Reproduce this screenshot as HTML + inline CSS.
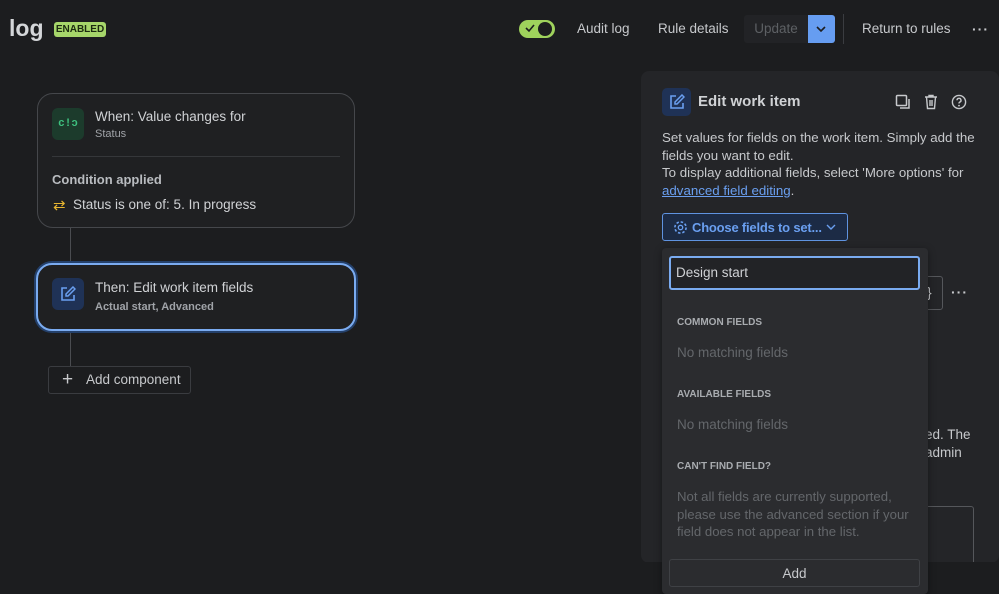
<!DOCTYPE html>
<html><head><meta charset="utf-8"><style>
*{box-sizing:border-box;margin:0;padding:0}
body{width:999px;height:594px;overflow:hidden;background:#1c1d1f;font-family:"Liberation Sans",sans-serif;color:#c7c9cc;position:relative;font-size:14px}
.a{position:absolute}
</style></head><body>
<div class="a" style="left:9px;top:15px;font-size:23px;font-weight:bold;color:#d4d6d9">log</div>
<div class="a" style="left:54px;top:22px;width:52px;height:15px;background:#a6d66a;border-radius:3px;color:#1c2b10;font-size:10px;font-weight:bold;text-align:center;line-height:15px">ENABLED</div>

<div class="a" style="left:519px;top:20px;width:36px;height:18px;background:#9fd25c;border-radius:9px"></div>
<div class="a" style="left:538px;top:22px;width:14px;height:14px;background:#1c1d1f;border-radius:50%"></div>
<svg class="a" style="left:525px;top:23px" width="10" height="10"><path d="M1 5l3 3 5-6" stroke="#1c1d1f" stroke-width="1.6" fill="none"/></svg>
<div class="a" style="left:577px;top:21px;color:#c7c9cc;font-size:13.5px">Audit log</div>
<div class="a" style="left:658px;top:21px;color:#c7c9cc;font-size:13.5px">Rule details</div>
<div class="a" style="left:744px;top:15px;width:64px;height:28px;background:#222326;border-radius:3px 0 0 3px;color:#5d6064;text-align:center;line-height:28px;font-size:13.5px">Update</div>
<div class="a" style="left:808px;top:15px;width:27px;height:28px;background:#669df1;border-radius:0 3px 3px 0"></div>
<svg class="a" style="left:815px;top:24px" width="12" height="10"><path d="M2 3l4 4 4-4" stroke="#1c1d1f" stroke-width="1.6" fill="none"/></svg>
<div class="a" style="left:843px;top:14px;width:1px;height:30px;background:#3a3c40"></div>
<div class="a" style="left:862px;top:21px;color:#c7c9cc;font-size:13.5px">Return to rules</div>
<div class="a" style="left:972px;top:21px;color:#c7c9cc;font-weight:bold;letter-spacing:1px">···</div>

<!-- left cards -->
<div class="a" style="left:70px;top:226px;width:1px;height:40px;background:#4a4c50"></div>
<div class="a" style="left:70px;top:330px;width:1px;height:36px;background:#4a4c50"></div>
<div class="a" style="left:37px;top:93px;width:318px;height:135px;border:1px solid #45474b;border-radius:16px;background:#1f2022"></div>
<div class="a" style="left:52px;top:108px;width:32px;height:32px;background:#1c3b2c;border-radius:6px;color:#3ec07f;font-size:11px;font-weight:bold;text-align:center;line-height:32px;font-family:'Liberation Mono',monospace">c!ɔ</div>
<div class="a" style="left:95px;top:109px;color:#d0d2d5;font-size:13.5px">When: Value changes for</div>
<div class="a" style="left:95px;top:128px;font-size:11px;color:#a0a3a8">Status</div>
<div class="a" style="left:52px;top:156px;width:288px;height:1px;background:#35373a"></div>
<div class="a" style="left:52px;top:172px;font-weight:bold;color:#b9bcc0;font-size:13px">Condition applied</div>
<div class="a" style="left:53px;top:196px;color:#e6b531;font-size:15px">⇄</div>
<div class="a" style="left:73px;top:197px;color:#d0d2d5;font-size:13.5px">Status is one of: 5. In progress</div>

<div class="a" style="left:36px;top:263px;width:320px;height:68px;border:2px solid #7aabf0;border-radius:16px;background:#1f2022;box-shadow:0 0 0 2px #24406a"></div>
<div class="a" style="left:52px;top:278px;width:32px;height:32px;background:#1f3256;border-radius:6px"></div>
<svg class="a" style="left:60px;top:286px" width="16" height="16"><path d="M7 2H2v12h12V9" stroke="#6a9ff0" stroke-width="1.6" fill="none"/><path d="M13 1l2 2-7 7H6V8z" stroke="#6a9ff0" stroke-width="1.5" fill="none"/></svg>
<div class="a" style="left:95px;top:280px;color:#d0d2d5;font-size:13.5px">Then: Edit work item fields</div>
<div class="a" style="left:95px;top:301px;font-size:11px;font-weight:bold;color:#a0a3a8">Actual start, Advanced</div>

<div class="a" style="left:48px;top:366px;width:143px;height:28px;border:1px solid #3a3c40;border-radius:3px"></div>
<div class="a" style="left:62px;top:369px;font-size:19px;color:#c7c9cc">+</div>
<div class="a" style="left:86px;top:372px;color:#c7c9cc;font-size:13.5px">Add component</div>

<!-- right panel -->
<div class="a" style="left:641px;top:71px;width:358px;height:492px;background:#242528;border-radius:8px"></div>
<div class="a" style="left:662px;top:88px;width:29px;height:28px;background:#1f3256;border-radius:5px"></div>
<svg class="a" style="left:669px;top:94px" width="16" height="16"><path d="M7 2H2v12h12V9" stroke="#6a9ff0" stroke-width="1.6" fill="none"/><path d="M13 1l2 2-7 7H6V8z" stroke="#6a9ff0" stroke-width="1.5" fill="none"/></svg>
<div class="a" style="left:698px;top:93px;font-weight:bold;color:#d0d2d5;font-size:15px">Edit work item</div>
<svg class="a" style="left:895px;top:94px" width="16" height="16"><rect x="1.5" y="1.5" width="10" height="10" rx="1" stroke="#c7c9cc" stroke-width="1.5" fill="none"/><path d="M14 5v9H5" stroke="#c7c9cc" stroke-width="1.5" fill="none"/></svg>
<svg class="a" style="left:923px;top:94px" width="16" height="16"><path d="M2 3h12M6 3V1.5h4V3M3.5 3l1 11.5h7l1-11.5M7 6v6M9 6v6" stroke="#c7c9cc" stroke-width="1.4" fill="none"/></svg>
<svg class="a" style="left:951px;top:94px" width="16" height="16"><circle cx="8" cy="8" r="6.6" stroke="#c7c9cc" stroke-width="1.4" fill="none"/><path d="M6 6.3a2 2 0 1 1 2.6 1.9c-.5.2-.6.6-.6 1.3" stroke="#c7c9cc" stroke-width="1.4" fill="none"/><circle cx="8" cy="11.6" r=".9" fill="#c7c9cc"/></svg>
<div class="a" style="left:662px;top:129px;width:325px;line-height:17.5px;color:#c7c9cc;font-size:13.3px">Set values for fields on the work item. Simply add the fields you want to edit.<br>To display additional fields, select 'More options' for <span style="color:#6a9ff0;text-decoration:underline">advanced field editing</span>.</div>
<div class="a" style="left:662px;top:213px;width:186px;height:28px;background:#1c2b45;border:1px solid #5f93e0;border-radius:3px"></div>
<svg class="a" style="left:673px;top:220px" width="15" height="15"><circle cx="7.5" cy="7.5" r="2.2" stroke="#6a9ff0" stroke-width="1.3" fill="none"/><circle cx="7.5" cy="7.5" r="5.6" stroke="#6a9ff0" stroke-width="1.6" stroke-dasharray="2.5 1.9" fill="none"/></svg>
<div class="a" style="left:692px;top:220px;color:#6a9ff0;font-weight:bold;font-size:13px;letter-spacing:-0.2px">Choose fields to set...</div>
<svg class="a" style="left:826px;top:223px" width="10" height="8"><path d="M1 2l4 4 4-4" stroke="#6a9ff0" stroke-width="1.4" fill="none"/></svg>

<div class="a" style="left:900px;top:276px;width:43px;height:34px;border:1px solid #55575b;border-radius:3px"></div>
<div class="a" style="left:927px;top:284px;color:#c7c9cc">}</div>
<div class="a" style="left:951px;top:284px;color:#c7c9cc;font-weight:bold;letter-spacing:1px">···</div>
<div class="a" style="left:925px;top:427px;color:#c7c9cc;font-size:13.5px">ed. The</div>
<div class="a" style="left:925px;top:445px;color:#c7c9cc;font-size:13.5px">admin</div>
<div class="a" style="left:900px;top:506px;width:74px;height:70px;border:1px solid #55575b;border-radius:3px"></div>
<div class="a" style="left:641px;top:562px;width:358px;height:32px;background:#1c1d1f"></div>

<!-- dropdown -->
<div class="a" style="left:662px;top:248px;width:266px;height:346px;background:#2b2c2f;border-radius:4px;box-shadow:0 2px 8px rgba(0,0,0,.4)"></div>
<div class="a" style="left:669px;top:256px;width:251px;height:34px;border:2px solid #7aabf0;border-radius:3px;background:#222326"></div>
<div class="a" style="left:676px;top:265px;color:#d0d2d5;font-size:13.5px">Design start</div>
<div class="a" style="left:677px;top:317px;font-size:10px;font-weight:bold;color:#a9acb0">COMMON FIELDS</div>
<div class="a" style="left:677px;top:345px;color:#64676b;font-size:13.5px">No matching fields</div>
<div class="a" style="left:677px;top:389px;font-size:10px;font-weight:bold;color:#a9acb0">AVAILABLE FIELDS</div>
<div class="a" style="left:677px;top:417px;color:#64676b;font-size:13.5px">No matching fields</div>
<div class="a" style="left:677px;top:461px;font-size:10px;font-weight:bold;color:#a9acb0">CAN'T FIND FIELD?</div>
<div class="a" style="left:677px;top:488px;width:248px;line-height:17.5px;color:#64676b;font-size:13.2px">Not all fields are currently supported, please use the advanced section if your field does not appear in the list.</div>
<div class="a" style="left:669px;top:559px;width:251px;height:28px;border:1px solid #3f4145;border-radius:3px;text-align:center;line-height:27px;color:#c7c9cc;font-size:13.5px">Add</div>
</body></html>
